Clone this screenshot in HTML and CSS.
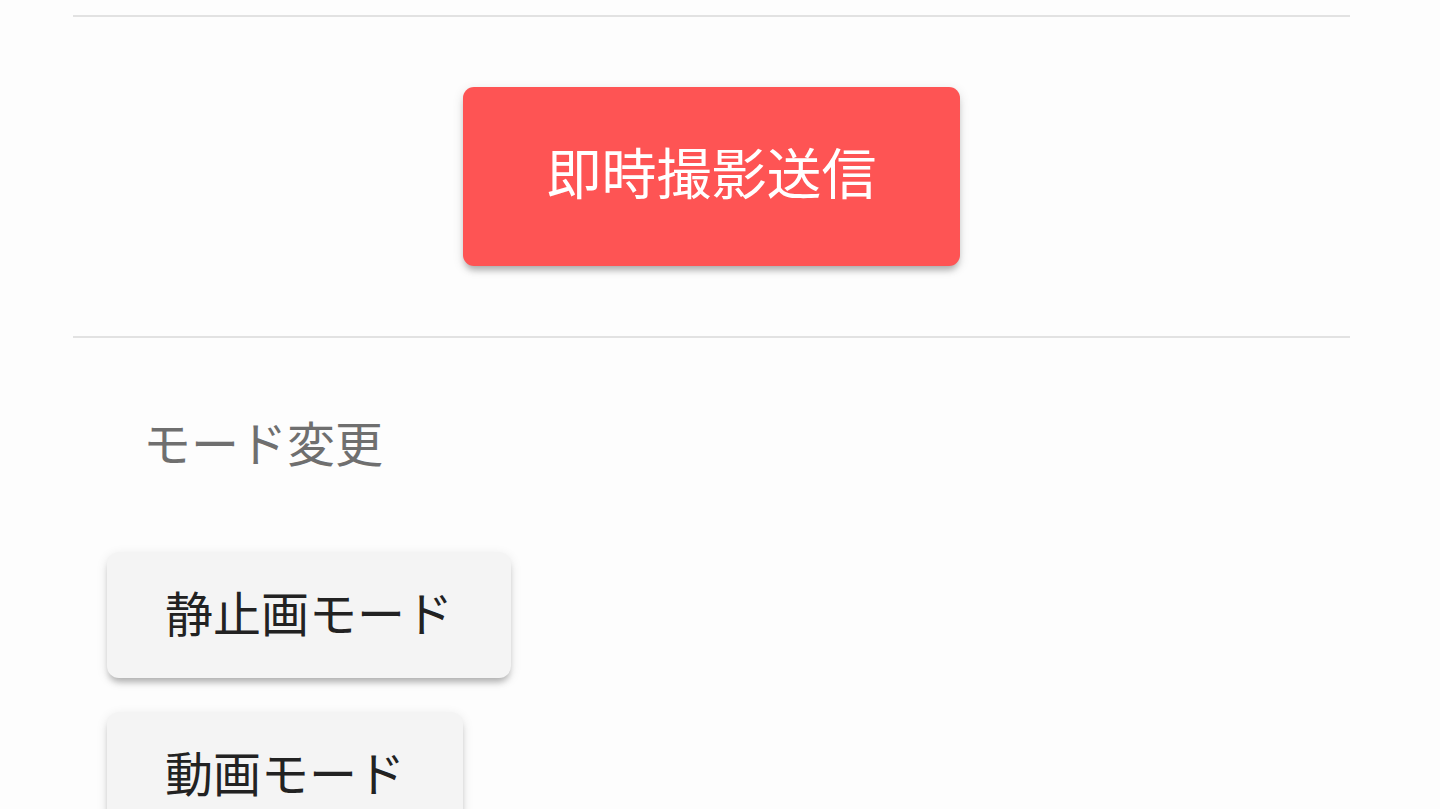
FILE: index.html
```html
<!DOCTYPE html>
<html lang="ja">
<head>
<meta charset="utf-8">
<link rel="stylesheet" href="styles.css">
</head>
<body>
<div class="page">
  <div class="divider top"></div>
  <div class="capture">
    <button class="btn-capture">即時撮影送信</button>
  </div>
  <div class="divider"></div>
  <div class="mode">
    <div class="mode-label">モード変更</div>
    <div class="mode-buttons">
      <button class="btn-mode">静止画モード</button>
      <button class="btn-mode">動画モード</button>
    </div>
  </div>
</div>
</body>
</html>
```
FILE: styles.css
```css
html, body {
  margin: 0;
  padding: 0;
  background: #fdfdfd;
  overflow: hidden;
  height: 809px;
}
body {
  font-family: "Noto Sans CJK JP", "Noto Sans", sans-serif;
}
.page {
  margin-left: 73px;
  width: 1277px;
  padding-top: 15px;
}
.divider {
  height: 2px;
  background: #e2e2e2;
}
.capture {
  display: flex;
  justify-content: center;
  padding: 70px 0 70px;
}
.btn-capture {
  font-family: inherit;
  width: 497px;
  height: 179px;
  border: none;
  border-radius: 11px;
  background: #fe5454;
  color: #ffffff;
  font-size: 55px;
  line-height: 1;
  letter-spacing: 0;
  padding: 0 0 12px;
  box-shadow: 0 6px 6px -2px rgba(0,0,0,0.25), 0 3px 12px rgba(0,0,0,0.12);
}
.mode {
  padding-top: 76px;
}
.mode-label {
  margin-left: 70px;
  font-size: 48px;
  line-height: 54px;
  color: #6f6f6f;
}
.mode-buttons {
  margin-top: 84px;
  margin-left: 34px;
  display: flex;
  flex-direction: column;
  align-items: flex-start;
  gap: 34px;
}
.btn-mode {
  font-family: inherit;
  height: 126px;
  padding: 0 58px 9px;
  border: none;
  border-radius: 12px;
  background: #f4f4f4;
  color: #222222;
  font-size: 48px;
  line-height: 1;
  box-shadow: 0 6px 6px -2px rgba(0,0,0,0.25), 0 3px 12px rgba(0,0,0,0.1);
}
```
